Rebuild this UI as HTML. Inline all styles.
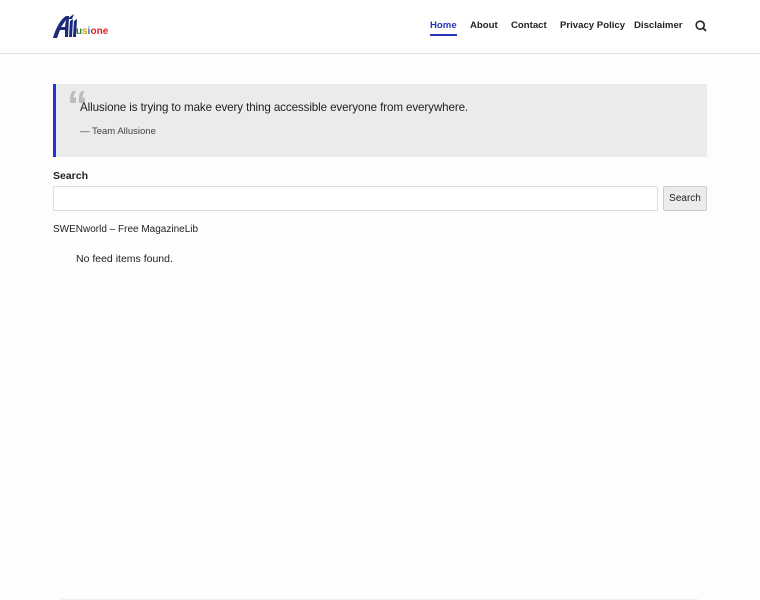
<!DOCTYPE html>
<html><head><meta charset="utf-8"><style>
*{margin:0;padding:0;box-sizing:border-box}
body{width:760px;height:600px;overflow:hidden;background:#fdfdfd;font-family:"Liberation Sans","DejaVu Sans",sans-serif;color:#222;position:relative}
header{height:54px;background:#fff;border-bottom:1px solid #e2e2e2;position:relative}
.logo{position:absolute;left:53px;top:13px}
nav span{position:absolute;top:20px;font-size:9.6px;font-weight:bold;color:#222;white-space:nowrap}
nav .act{color:#2534b8}
nav .act:after{content:"";position:absolute;left:0;right:0;top:14px;height:2px;background:#2534b8}
.quote{position:absolute;left:53px;top:84px;width:654px;height:73px;background:#ebebeb;border-left:3px solid #2234e0}
.qm{position:absolute;left:11px;top:-2px;font-size:42px;color:#bbb;font-family:"Liberation Sans",sans-serif;font-weight:bold}
.qt{position:absolute;left:24px;top:17px;font-size:11.6px;color:#222;letter-spacing:-0.1px}
.qa{position:absolute;left:24px;top:42px;font-size:9.5px;color:#444}
.lbl{position:absolute;left:53px;top:170px;font-size:10.5px;font-weight:bold}
.inp{position:absolute;left:53px;top:186px;width:605px;height:25px;border:1px solid #ddd;background:#fff;border-radius:2px}
.btn{position:absolute;left:663px;top:186px;width:44px;height:25px;border:1px solid #ccc;background:#ececec;font-size:10px;text-align:center;line-height:23px;border-radius:2px}
.t1{position:absolute;left:53px;top:224px;font-size:10px}
.t2{position:absolute;left:76px;top:253px;font-size:10.5px}
.bl{position:absolute;left:61px;right:62px;top:599px;height:1px;background:#eee}
</style></head><body>
<header>
<svg class="logo" width="58" height="27" viewBox="0 0 58 27">
<path d="M0 25 C3 14 8 6 13 3 L16 3 L15 24 L12 24 L12 17 L7 17 L4 25 Z M8 14 L12 14 L13 7 Z" fill="#1b2a7a"/>
<path d="M14 6 L21 1 L19 6 Z" fill="#1b2a7a"/>
<path d="M17 8 L20 6 L19 24 L16 24 Z M21 8 L24 6 L23 24 L20 24 Z" fill="#1b2a7a"/>
<text x="23" y="21" font-family="Liberation Sans" font-weight="bold" font-size="10" fill="#2a8a2a">u</text>
<text x="29" y="21" font-family="Liberation Sans" font-weight="bold" font-size="10" fill="#d7a000">s</text>
<text x="34.5" y="21" font-family="Liberation Sans" font-weight="bold" font-size="10" fill="#2a6ad0">i</text>
<text x="37.5" y="21" font-family="Liberation Sans" font-weight="bold" font-size="10" fill="#d22">one</text>
</svg>
<nav><span class="act" style="left:430px">Home</span><span style="left:470px">About</span><span style="left:511px">Contact</span><span style="left:560px">Privacy Policy</span><span style="left:634px">Disclaimer</span>
<span style="left:695px;top:20px"><svg width="12" height="12" viewBox="0 0 12 12"><circle cx="5.2" cy="5.2" r="4" fill="none" stroke="#222" stroke-width="1.6"/><path d="M8 8 L11 11" stroke="#222" stroke-width="1.8"/></svg></span></nav>
</header>
<div class="quote"><div class="qm">“</div><div class="qt">Allusione is trying to make every thing accessible everyone from everywhere.</div><div class="qa">— Team Allusione</div></div>
<div class="lbl">Search</div>
<div class="inp"></div><div class="btn">Search</div>
<div class="t1">SWENworld – Free MagazineLib</div>
<div class="t2">No feed items found.</div>
<div class="bl"></div>
</body></html>
